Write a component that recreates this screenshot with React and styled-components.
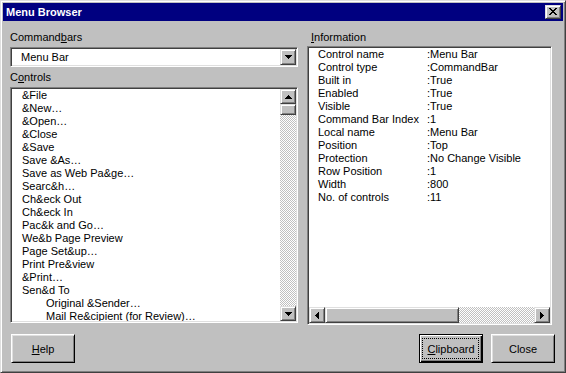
import React from 'react';
import styled, { createGlobalStyle, css } from 'styled-components';

const GlobalStyle = createGlobalStyle`
  html, body {
    margin: 0;
    padding: 0;
    background: #c0c0c0;
  }
  body {
    font-family: "Liberation Sans", Arial, sans-serif;
    font-size: 11px;
    color: #000;
  }
`;

const raised = css`
  border: 1px solid;
  border-color: #dfdfdf #404040 #404040 #dfdfdf;
  box-shadow: inset 1px 1px #fff, inset -1px -1px #808080;
  background: #c0c0c0;
  box-sizing: border-box;
`;

const sunken = css`
  border: 1px solid;
  border-color: #808080 #fff #fff #808080;
  box-shadow: inset 1px 1px #404040, inset -1px -1px #dfdfdf;
  padding: 1px;
  box-sizing: border-box;
`;

const Window = styled.div`
  width: 566px;
  height: 373px;
  box-sizing: border-box;
  background: #c0c0c0;
  border: 1px solid;
  border-color: #dfdfdf #404040 #404040 #dfdfdf;
  box-shadow: inset 1px 1px #fff, inset -1px -1px #808080;
  padding: 2px;
  display: flex;
  flex-direction: column;
`;

const TitleBar = styled.div`
  height: 18px;
  background: #000080;
  display: flex;
  align-items: center;
  justify-content: space-between;
  padding: 0 2px 0 3px;
`;

const Title = styled.span`
  color: #fff;
  font-weight: bold;
  font-size: 11px;
  line-height: 13px;
`;

const TitleButton = styled.div`
  ${raised};
  width: 16px;
  height: 14px;
  display: flex;
  align-items: center;
  justify-content: center;
  padding-bottom: 1px;
`;

const Body = styled.div`
  flex: 1;
  display: flex;
  flex-direction: column;
  padding: 10px 11px 7px 7px;
  min-height: 0;
`;

const Main = styled.div`
  flex: 1;
  display: flex;
  gap: 9px;
  min-height: 0;
`;

const Column = styled.div`
  width: ${p => p.$width}px;
  display: flex;
  flex-direction: column;
  min-height: 0;
`;

const Label = styled.div`
  line-height: 13px;
  height: 13px;
  margin-top: ${p => p.$top || 0}px;
  margin-bottom: ${p => p.$bottom || 3}px;
  padding-left: ${p => p.$indent || 0}px;
`;

const Combo = styled.div`
  ${sunken};
  height: 20px;
  background: #fff;
  display: flex;
`;

const ComboText = styled.div`
  flex: 1;
  padding-left: 9px;
  line-height: 16px;
`;

const ArrowButton = styled.div`
  ${raised};
  width: 16px;
  height: ${p => p.$height || 16}px;
  flex-shrink: 0;
  display: flex;
  align-items: center;
  justify-content: center;
`;

const ListBox = styled.div`
  ${sunken};
  flex: 1;
  min-height: 0;
  background: #fff;
  display: flex;
  margin-bottom: ${p => p.$bottom || 0}px;
`;

const Items = styled.div`
  flex: 1;
  overflow: hidden;
  padding-left: 10px;
`;

const Item = styled.div`
  height: 13px;
  line-height: 13px;
  white-space: nowrap;
  padding-left: ${p => (p.$sub ? 24 : 0)}px;
`;

const VScroll = styled.div`
  width: 16px;
  display: flex;
  flex-direction: column;
`;

const Trough = styled.div`
  flex: 1;
  background: repeating-conic-gradient(#c0c0c0 0 25%, #fff 0 50%) 0 0 / 2px 2px;
`;

const Thumb = styled.div`
  ${raised};
  width: ${p => p.$w}px;
  height: ${p => p.$h}px;
  flex-shrink: 0;
`;

const InfoBox = styled.div`
  ${sunken};
  flex: 1;
  min-height: 0;
  background: #fff;
  display: flex;
  flex-direction: column;
`;

const InfoRows = styled.div`
  flex: 1;
  overflow: hidden;
  padding-left: 9px;
`;

const InfoRow = styled.div`
  display: flex;
  height: 13px;
  line-height: 13px;
  white-space: nowrap;
`;

const InfoKey = styled.span`
  width: 109px;
  flex-shrink: 0;
`;

const HScroll = styled.div`
  height: 16px;
  display: flex;
`;

const ButtonRow = styled.div`
  display: flex;
  margin: 9px -3px 0 1px;
  gap: 8px;
`;

const Button = styled.div`
  position: relative;
  width: 64px;
  height: 29px;
  box-sizing: border-box;
  display: flex;
  align-items: center;
  justify-content: center;
  background: #c0c0c0;
  border: 1px solid;
  border-color: #fff #000 #000 #fff;
  box-shadow: inset 1px 1px #dfdfdf, inset -1px -1px #808080;
  ${p => p.$push && css`margin-left: auto;`}
  ${p => p.$focused && css`
    border-color: #000;
    box-shadow: inset 1px 1px #fff, inset -1px -1px #000, inset -2px -2px #808080;
    &::after {
      content: '';
      position: absolute;
      inset: 3px 3px 3px 2px;
      border: 1px dotted #000;
    }
  `}
`;

const Key = styled.u`
  text-decoration: underline;
  text-underline-offset: 1px;
`;

const Pixels = styled.svg`
  display: block;
`;

const PixelIcon = ({ rows }) => (
  <Pixels width={rows[0].length} height={rows.length} shapeRendering="crispEdges">
    {rows.flatMap((row, y) =>
      [...row].map((c, x) =>
        c === '#' ? <rect key={`${x}-${y}`} x={x} y={y} width="1" height="1" fill="#000" /> : null
      )
    )}
  </Pixels>
);

const ICONS = {
  close: ['##....##', '.##..##.', '..####..', '...##...', '..####..', '.##..##.', '##....##'],
  up: ['...#...', '..###..', '.#####.', '#######'],
  down: ['#######', '.#####.', '..###..', '...#...'],
  left: ['...#', '..##', '.###', '####', '.###', '..##', '...#'],
  right: ['#...', '##..', '###.', '####', '###.', '##..', '#...'],
};

const controls = [
  ['&File'], ['&New…'], ['&Open…'], ['&Close'], ['&Save'], ['Save &As…'],
  ['Save as Web Pa&ge…'], ['Searc&h…'], ['Ch&eck Out'], ['Ch&eck In'],
  ['Pac&k and Go…'], ['We&b Page Preview'], ['Page Set&up…'], ['Print Pre&view'],
  ['&Print…'], ['Sen&d To'], ['Original &Sender…', true], ['Mail Re&cipient (for Review)…', true],
];

const info = [
  ['Control name', ':Menu Bar'],
  ['Control type', ':CommandBar'],
  ['Built in', ':True'],
  ['Enabled', ':True'],
  ['Visible', ':True'],
  ['Command Bar Index', ':1'],
  ['Local name', ':Menu Bar'],
  ['Position', ':Top'],
  ['Protection', ':No Change Visible'],
  ['Row Position', ':1'],
  ['Width', ':800'],
  ['No. of controls', ':11'],
];

export default function App() {
  return (
    <>
      <GlobalStyle />
      <Window>
        <TitleBar>
          <Title>Menu Browser</Title>
          <TitleButton><PixelIcon rows={ICONS.close} /></TitleButton>
        </TitleBar>
        <Body>
          <Main>
            <Column $width={288}>
              <Label>Command<Key>b</Key>ars</Label>
              <Combo>
                <ComboText>Menu Bar</ComboText>
                <ArrowButton><PixelIcon rows={ICONS.down} /></ArrowButton>
              </Combo>
              <Label $top={4}>C<Key>o</Key>ntrols</Label>
              <ListBox $bottom={2}>
                <Items>
                  {controls.map(([text, sub], i) => (
                    <Item key={i} $sub={sub}>{text}</Item>
                  ))}
                </Items>
                <VScroll>
                  <ArrowButton $height={15}><PixelIcon rows={ICONS.up} /></ArrowButton>
                  <Thumb $w={16} $h={11} />
                  <Trough />
                  <ArrowButton $height={15}><PixelIcon rows={ICONS.down} /></ArrowButton>
                </VScroll>
              </ListBox>
            </Column>
            <Column $width={245}>
              <Label $indent={4} $bottom={2}><Key>I</Key>nformation</Label>
              <InfoBox>
                <InfoRows>
                  {info.map(([k, v]) => (
                    <InfoRow key={k}>
                      <InfoKey>{k}</InfoKey>
                      <span>{v}</span>
                    </InfoRow>
                  ))}
                </InfoRows>
                <HScroll>
                  <ArrowButton><PixelIcon rows={ICONS.left} /></ArrowButton>
                  <Thumb $w={134} $h={16} />
                  <Trough />
                  <ArrowButton><PixelIcon rows={ICONS.right} /></ArrowButton>
                </HScroll>
              </InfoBox>
            </Column>
          </Main>
          <ButtonRow>
            <Button><span><Key>H</Key>elp</span></Button>
            <Button $push $focused><span><Key>C</Key>lipboard</span></Button>
            <Button>Close</Button>
          </ButtonRow>
        </Body>
      </Window>
    </>
  );
}
